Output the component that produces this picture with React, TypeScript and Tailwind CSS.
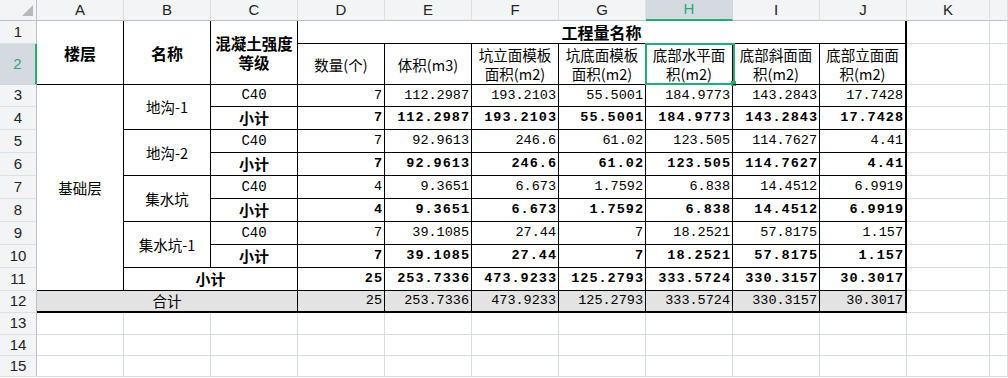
import { Fragment } from "react";
import clsx from "clsx";

// Spreadsheet view: quantity summary sheet with H2 selected

const CJK = "[font-family:'Noto_Sans_CJK_SC',sans-serif]";
const MONO = "[font-family:'Liberation_Mono','Noto_Sans_CJK_SC',monospace]";
const UI = "[font-family:'Liberation_Sans',Arial,sans-serif]";

const columns = ["A", "B", "C", "D", "E", "F", "G", "H", "I", "J", "K", ""];

const groups = [
  { name: "地沟-1", vals: ["7", "112.2987", "193.2103", "55.5001", "184.9773", "143.2843", "17.7428"] },
  { name: "地沟-2", vals: ["7", "92.9613", "246.6", "61.02", "123.505", "114.7627", "4.41"] },
  { name: "集水坑", vals: ["4", "9.3651", "6.673", "1.7592", "6.838", "14.4512", "6.9919"] },
  { name: "集水坑-1", vals: ["7", "39.1085", "27.44", "7", "18.2521", "57.8175", "1.157"] },
];

const total = ["25", "253.7336", "473.9233", "125.2793", "333.5724", "330.3157", "30.3017"];

function RowHead({ n, active }: { n: number; active?: boolean }) {
  return (
    <div
      className={clsx(
        "flex items-center justify-center text-[15px]",
        UI,
        active
          ? "bg-[#d5d9e0] text-[#1fae74] border-r-2 border-r-[#1fae74] border-b border-b-[#d0d4dc]"
          : "bg-[#f3f4f6] text-[#222] border-r border-b border-r-[#b9c0cc] border-b-[#dcdfe5]"
      )}
    >
      {n}
    </div>
  );
}

function Blank({ count = 1 }: { count?: number }) {
  return (
    <>
      {Array.from({ length: count }).map((_, i) => (
        <div key={i} className="border-r border-b border-[#d6dae1]" />
      ))}
    </>
  );
}

function Nums({ vals, bold, total: isTotal }: { vals: string[]; bold?: boolean; total?: boolean }) {
  return (
    <>
      {vals.map((v, i) => (
        <div
          key={i}
          className={clsx(
            "flex items-center justify-end border-black text-black text-[13.5px] leading-none",
            MONO,
            i === vals.length - 1 ? "border-r-2" : "border-r",
            isTotal ? "border-b-2 bg-[#e3e3e3]" : "border-b",
            bold ? "font-bold tracking-[1px] pr-[1px]" : "pr-[2px]"
          )}
        >
          {v}
        </div>
      ))}
    </>
  );
}

function HeadCell({ children, last, selected }: { children: React.ReactNode; last?: boolean; selected?: boolean }) {
  return (
    <div
      className={clsx(
        "relative flex items-center justify-center text-center border-b border-black text-black text-[14.5px] leading-[19px]",
        CJK,
        last ? "border-r-2" : "border-r"
      )}
    >
      <span>{children}</span>
      {selected && (
        <>
          <div className="absolute -left-px -top-px w-[90px] h-[42px] border-2 border-[#1fae74]" />
          <div className="absolute left-[85px] top-[37px] w-[5px] h-[5px] bg-[#1fae74]" />
        </>
      )}
    </div>
  );
}

export default function App() {
  return (
    <div className="w-[1008px] h-[378px] overflow-hidden bg-white">
      <div className="grid grid-cols-[37px_repeat(10,87px)_83px_1fr] grid-rows-[21px_23px_41px_22px_repeat(8,23px)_22px_22px_21px_21px]">
        {/* Column header */}
        <div className="flex items-end justify-end pr-[3px] pb-[4px] bg-[#f3f4f6] border-r border-b border-r-[#b9c0cc] border-b-[#b9c0cc]">
          <svg width="11" height="11" viewBox="0 0 11 11">
            <polygon points="11,0 11,11 0,11" fill="#b8b8b8" />
          </svg>
        </div>
        {columns.map((c) =>
          c === "H" ? (
            <div
              key={c}
              className={clsx(
                "flex items-center justify-center bg-[#d5d9e0] text-[#1fae74] text-[15px] border-r border-r-[#d0d4dc] border-b-2 border-b-[#1fae74]",
                UI
              )}
            >
              {c}
            </div>
          ) : (
            <div
              key={c || "L"}
              className={clsx(
                "flex items-center justify-center bg-[#f3f4f6] text-[#222] text-[15px] border-r border-b border-r-[#dcdfe5] border-b-[#b9c0cc]",
                UI
              )}
            >
              {c}
            </div>
          )
        )}

        {/* Row 1 */}
        <RowHead n={1} />
        <div className={clsx("row-span-2 flex items-center justify-center border-r border-b border-black font-bold text-[16px] text-black", CJK)}>
          楼层
        </div>
        <div className={clsx("row-span-2 flex items-center justify-center border-r border-b border-black font-bold text-[16px] text-black", CJK)}>
          名称
        </div>
        <div className={clsx("row-span-2 flex flex-col items-center justify-center text-center border-r border-b border-black font-bold text-[15.5px] leading-[19px] text-black", CJK)}>
          <span>混凝土强度</span>
          <span>等级</span>
        </div>
        <div className={clsx("col-span-7 flex items-center justify-center border-r-2 border-b border-black font-bold text-[16px] text-black", CJK)}>
          工程量名称
        </div>
        <Blank count={2} />

        {/* Row 2 */}
        <RowHead n={2} active />
        <HeadCell>数量(个)</HeadCell>
        <HeadCell>体积(m3)</HeadCell>
        <HeadCell>
          坑立面模板
          <br />
          面积(m2)
        </HeadCell>
        <HeadCell>
          坑底面模板
          <br />
          面积(m2)
        </HeadCell>
        <HeadCell selected>
          底部水平面
          <br />
          积(m2)
        </HeadCell>
        <HeadCell>
          底部斜面面
          <br />
          积(m2)
        </HeadCell>
        <HeadCell last>
          底部立面面
          <br />
          积(m2)
        </HeadCell>
        <Blank count={2} />

        {/* Rows 3-10 */}
        {groups.map((g, gi) => (
          <Fragment key={g.name}>
            <RowHead n={3 + gi * 2} />
            {gi === 0 && (
              <div className={clsx("row-span-9 flex items-center justify-center border-r border-b border-black text-[14.5px] text-black", CJK)}>
                基础层
              </div>
            )}
            <div className={clsx("row-span-2 flex items-center justify-center border-r border-b border-black text-[14.5px] text-black", CJK)}>
              {g.name}
            </div>
            <div className={clsx("flex items-center justify-center border-r border-b border-black text-[14px] text-black", MONO)}>
              C40
            </div>
            <Nums vals={g.vals} />
            <Blank count={2} />

            <RowHead n={4 + gi * 2} />
            <div className={clsx("flex items-center justify-center border-r border-b border-black font-bold text-[15px] text-black", CJK)}>
              小计
            </div>
            <Nums vals={g.vals} bold />
            <Blank count={2} />
          </Fragment>
        ))}

        {/* Row 11 */}
        <RowHead n={11} />
        <div className={clsx("col-span-2 flex items-center justify-center border-r border-b border-black font-bold text-[15px] text-black", CJK)}>
          小计
        </div>
        <Nums vals={total} bold />
        <Blank count={2} />

        {/* Row 12 */}
        <RowHead n={12} />
        <div className={clsx("col-span-3 flex items-center justify-center border-r border-b-2 border-black bg-[#e3e3e3] text-[14.5px] text-black", CJK)}>
          合计
        </div>
        <Nums vals={total} total />
        <Blank count={2} />

        {/* Empty rows */}
        {[13, 14, 15].map((n) => (
          <Fragment key={n}>
            <RowHead n={n} />
            <Blank count={12} />
          </Fragment>
        ))}
      </div>
    </div>
  );
}
